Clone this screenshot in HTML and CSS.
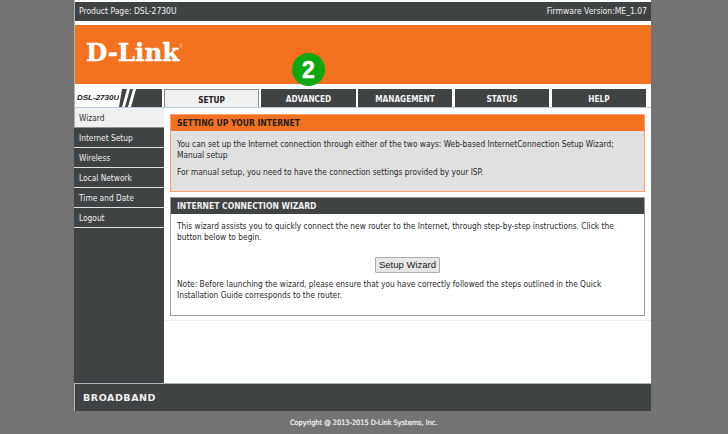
FILE: index.html
```html
<!DOCTYPE html>
<html lang="en">
<head>
<meta charset="utf-8">
<title>D-Link DSL-2730U</title>
<link rel="stylesheet" href="styles.css">
</head>
<body>
<div class="page">
  <div class="topbar"><span>Product Page: DSL-2730U</span><span>Firmware Version:ME_1.07</span></div>
  <div class="banner">
    <span class="logo">D-Link</span><span class="reg">®</span>
    <span class="badge">2</span>
  </div>
  <div class="navrow">
    <div class="model">
      <span class="model-name">DSL-2730U</span>
      <svg class="slashes" width="43" height="18" viewBox="0 0 43 18"><path d="M0 0H3L0 18Z M8 0H11L6 18H3Z M14 0H17L12 18H9Z" fill="#fff"/></svg>
    </div>
    <div class="tabs">
      <a class="tab tab-active tab-setup">SETUP</a>
      <a class="tab tab-advanced">ADVANCED</a>
      <a class="tab tab-management">MANAGEMENT</a>
      <a class="tab tab-status">STATUS</a>
      <a class="tab tab-help">HELP</a>
    </div>
  </div>
  <div class="body">
    <nav class="side">
      <a class="side-item side-active">Wizard</a>
      <a class="side-item">Internet Setup</a>
      <a class="side-item">Wireless</a>
      <a class="side-item">Local Network</a>
      <a class="side-item">Time and Date</a>
      <a class="side-item">Logout</a>
    </nav>
    <main class="main">
      <section class="box box-orange">
        <h2 class="box-head head-orange">SETTING UP YOUR INTERNET</h2>
        <div class="box-body">
          <p class="text">You can set up the Internet connection through either of the two ways: Web-based InternetConnection Setup Wizard; Manual setup</p>
          <p class="text">For manual setup, you need to have the connection settings provided by your ISP.</p>
        </div>
      </section>
      <section class="box box-grey">
        <h2 class="box-head head-dark">INTERNET CONNECTION WIZARD</h2>
        <div class="box-body box-body-wizard">
          <p class="text">This wizard assists you to quickly connect the new router to the Internet, through step-by-step instructions. Click the button below to begin.</p>
          <div class="action"><button class="btn" type="button">Setup Wizard</button></div>
          <p class="text">Note: Before launching the wizard, please ensure that you have correctly followed the steps outlined in the Quick Installation Guide corresponds to the router.</p>
        </div>
      </section>
      <div class="rule"></div>
    </main>
  </div>
  <div class="foot"><span class="broadband">BROADBAND</span></div>
</div>
<div class="copyright">Copyright @ 2013-2015 D-Link Systems, Inc.</div>
</body>
</html>
```
FILE: styles.css
```css
* { box-sizing: border-box; }
html, body { margin: 0; padding: 0; }
body {
  width: 728px;
  height: 434px;
  overflow: hidden;
  background: #737373;
  font-family: "DejaVu Sans Condensed", "DejaVu Sans", sans-serif;
  color: #333;
}
.page {
  width: 577px;
  margin-left: 74px;
  height: 411px;
  background: #fff;
  border-left: 1px solid #a9b4bb;
  display: flex;
  flex-direction: column;
  padding-top: 2px;
}
.topbar {
  height: 19px;
  flex: none;
  background: #404344;
  color: #f0f0f0;
  font-size: 8.5px;
  display: flex;
  justify-content: space-between;
  align-items: center;
  padding: 0 4px 2px 4px;
}
.banner {
  flex: none;
  height: 59px;
  margin-top: 4px;
  background: #f47120;
  position: relative;
  display: flex;
  align-items: flex-start;
}
.logo {
  font-family: "DejaVu Serif", serif;
  font-weight: bold;
  font-size: 24.5px;
  line-height: 28px;
  color: #fff;
  margin: 14px 0 0 11px;
  -webkit-text-stroke: 0.4px #fff;
}
.reg {
  font-family: "Liberation Sans", sans-serif;
  font-size: 5px;
  line-height: 6px;
  margin-top: 18px;
  color: #fbd3b8;
}
.badge {
  position: absolute;
  left: 217px;
  top: 28px;
  width: 33px;
  height: 33px;
  border-radius: 50%;
  background: #0da80f;
  color: #fff;
  font-family: "Liberation Sans", sans-serif;
  font-weight: bold;
  font-size: 23px;
  line-height: 34px;
  text-align: center;
  -webkit-text-stroke: 0.5px #fff;
  z-index: 2;
}
.navrow {
  flex: none;
  height: 19px;
  margin-top: 5px;
  display: flex;
  border-bottom: 1px solid #b9cbd8;
}
.model {
  width: 87px;
  flex: none;
  background: #404344;
  display: flex;
}
.model-name {
  width: 44px;
  height: 18px;
  background: #fff;
  color: #222;
  font-family: "Liberation Sans", sans-serif;
  font-size: 8px;
  font-weight: bold;
  font-style: italic;
  line-height: 18px;
  padding-left: 2px;
  white-space: nowrap;
}
.slashes { flex: none; }
.tabs {
  display: flex;
  margin-left: 2px;
}
.tab {
  height: 18px;
  background: #404344;
  color: #f4f4f4;
  font-weight: bold;
  font-size: 8.2px;
  line-height: 21px;
  text-align: center;
  flex: none;
}
.tab-active {
  background: #f0f0f0;
  color: #222;
  border: 1px solid #8d9090;
  border-bottom: none;
  line-height: 20px;
}
.tab-setup { width: 95px; margin-right: 2px; }
.tab-advanced { width: 95px; margin-right: 2px; }
.tab-management { width: 94px; margin-right: 3px; }
.tab-status { width: 94px; margin-right: 3px; }
.tab-help { width: 94px; }
.body {
  flex: 1;
  display: flex;
  min-height: 0;
}
.side {
  width: 90px;
  flex: none;
  margin-left: -1px;
  background: #404344;
  border-bottom: 1px solid #a9b4bb;
}
.side-item {
  display: block;
  height: 20px;
  padding-left: 5px;
  font-size: 8.3px;
  line-height: 21px;
  color: #f0f0f0;
  border-bottom: 1px solid #dfe3e5;
}
.side-active {
  background: #f0f0f0;
  color: #333;
  border-left: 1px solid #a9b4bb;
  border-bottom-color: #8d9090;
  padding-left: 4px;
}
.main {
  flex: 1;
  padding: 6px 6px 0 6px;
  border-bottom: 1px solid #a9b4bb;
}
.box { border: 1px solid; }
.box-orange { border-color: #f8a070; background: #e0e0e0; height: 78px; margin-bottom: 5px; }
.box-grey { border-color: #9a9a9a; background: #fff; height: 119px; }
.box-head {
  margin: 0;
  height: 16px;
  padding-left: 6px;
  font-size: 8.5px;
  line-height: 16px;
  font-weight: bold;
}
.head-orange { background: #f47120; color: #222; }
.head-dark { background: #404344; color: #f0f0f0; line-height: 17px; }
.box-body { padding: 8px 12px 0 6px; }
.box-body-wizard { padding-top: 7px; }
.text {
  margin: 0 0 6px 0;
  font-size: 8.3px;
  line-height: 11px;
  color: #2a2a2a;
}
.action {
  display: flex;
  justify-content: center;
  margin: 14px 0 6px 0;
  padding-left: 6px;
}
.btn {
  width: 65px;
  height: 16px;
  padding: 0;
  background: #e6e6e6;
  border: 1px solid #adadad;
  border-radius: 1px;
  font-family: "Liberation Sans", sans-serif;
  font-size: 9.5px;
  line-height: 14px;
  color: #222;
}
.rule {
  height: 1px;
  margin: 4px -6px 0 -6px;
  background: #eeeeee;
}
.foot {
  flex: none;
  height: 27px;
  background: #404344;
  display: flex;
  align-items: center;
  padding-left: 8px;
}
.broadband {
  font-family: "DejaVu Sans", sans-serif;
  font-weight: bold;
  font-size: 9.5px;
  letter-spacing: 0.55px;
  color: #efefef;
}
.copyright {
  width: 728px;
  padding-left: 290px;
  margin-top: 6px;
  font-size: 7.3px;
  line-height: 11px;
  color: #f4f4f4;
  -webkit-text-stroke: 0.2px #f4f4f4;
}
```
